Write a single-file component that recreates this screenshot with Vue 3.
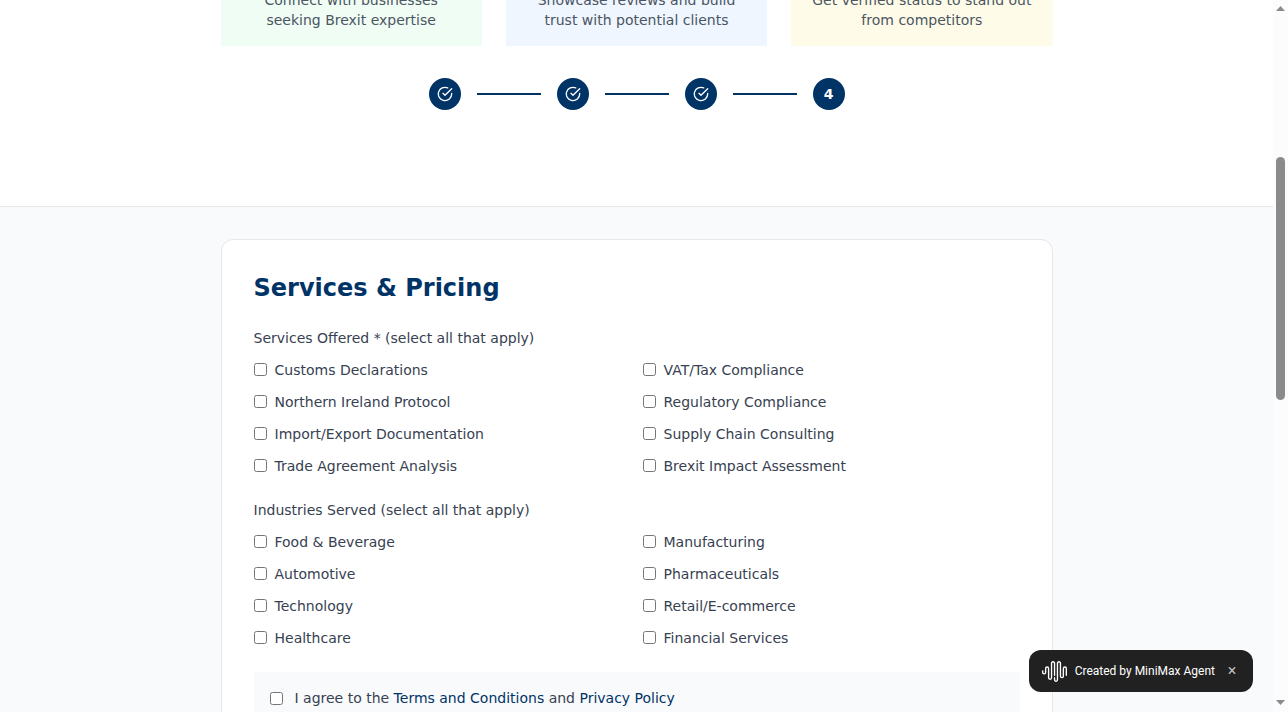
<script setup>
import { ref } from 'vue'

const benefits = [
  { tone: 'green', text: 'Connect with businesses seeking Brexit expertise' },
  { tone: 'blue', text: 'Showcase reviews and build trust with potential clients' },
  { tone: 'yellow', text: 'Get verified status to stand out from competitors' },
]

const steps = [1, 2, 3, 4]
const currentStep = 4

const groups = [
  {
    id: 'services',
    label: 'Services Offered * (select all that apply)',
    options: [
      'Customs Declarations',
      'VAT/Tax Compliance',
      'Northern Ireland Protocol',
      'Regulatory Compliance',
      'Import/Export Documentation',
      'Supply Chain Consulting',
      'Trade Agreement Analysis',
      'Brexit Impact Assessment',
    ],
  },
  {
    id: 'industries',
    label: 'Industries Served (select all that apply)',
    options: [
      'Food & Beverage',
      'Manufacturing',
      'Automotive',
      'Pharmaceuticals',
      'Technology',
      'Retail/E-commerce',
      'Healthcare',
      'Financial Services',
    ],
  },
]

const selected = ref([])
const agreed = ref(false)
const badgeOpen = ref(true)
</script>

<template>
  <div class="window">
    <div class="page">
      <header class="intro">
        <div class="container">
          <div class="benefits">
            <div v-for="b in benefits" :key="b.tone" class="benefit" :class="b.tone">
              <p>{{ b.text }}</p>
            </div>
          </div>
          <div class="steps">
            <template v-for="step in steps" :key="step">
              <div class="step">
                <svg v-if="step < currentStep" class="check" viewBox="0 0 24 24" aria-hidden="true">
                  <path d="M22 11.08V12a10 10 0 1 1-5.93-9.14" />
                  <path d="m9 11 3 3L22 4" />
                </svg>
                <span v-else>{{ step }}</span>
              </div>
              <div v-if="step < steps.length" class="line"></div>
            </template>
          </div>
        </div>
      </header>

      <main class="container">
        <form class="card" @submit.prevent>
          <h2>Services &amp; Pricing</h2>
          <fieldset v-for="group in groups" :key="group.id" class="group">
            <legend>{{ group.label }}</legend>
            <div class="options">
              <label v-for="option in group.options" :key="option" class="option">
                <input v-model="selected" type="checkbox" :value="option" />
                <span>{{ option }}</span>
              </label>
            </div>
          </fieldset>
          <div class="terms">
            <input id="agree" v-model="agreed" type="checkbox" />
            <label for="agree">
              I agree to the <a href="#terms">Terms and Conditions</a> and
              <a href="#privacy">Privacy Policy</a>
            </label>
          </div>
        </form>
      </main>

      <div v-if="badgeOpen" class="badge">
        <svg class="logo" viewBox="0 0 24 24" aria-hidden="true">
          <path d="M16.278 2c1.156 0 2.093.927 2.093 2.07v12.501a.74.74 0 00.744.709.74.74 0 00.743-.709V9.099a2.06 2.06 0 012.071-2.049A2.06 2.06 0 0124 9.1v6.561a.649.649 0 01-.652.645.649.649 0 01-.653-.645V9.1a.762.762 0 00-.766-.758.762.762 0 00-.766.758v7.472a2.037 2.037 0 01-2.048 2.026 2.037 2.037 0 01-2.048-2.026v-12.5a.785.785 0 00-.788-.753.785.785 0 00-.789.752l-.001 15.904A2.037 2.037 0 0113.441 22a2.037 2.037 0 01-2.048-2.026V18.04c0-.356.292-.645.652-.645.36 0 .652.289.652.645v1.934c0 .263.142.506.372.638.23.131.514.131.744 0a.734.734 0 00.372-.638V4.07c0-1.143.937-2.07 2.093-2.07zm-5.674 0c1.156 0 2.093.927 2.093 2.07v11.523a.648.648 0 01-.652.645.648.648 0 01-.652-.645V4.07a.785.785 0 00-.789-.78.785.785 0 00-.789.78v14.013a2.06 2.06 0 01-2.07 2.048 2.06 2.06 0 01-2.071-2.048V9.1a.762.762 0 00-.766-.758.762.762 0 00-.766.758v3.8a2.06 2.06 0 01-2.071 2.049A2.06 2.06 0 010 12.9v-1.378c0-.357.292-.646.652-.646.36 0 .653.29.653.646V12.9c0 .418.343.757.766.757s.766-.339.766-.757V9.099a2.06 2.06 0 012.07-2.048 2.06 2.06 0 012.071 2.048v8.984c0 .419.343.758.767.758.423 0 .766-.339.766-.758V4.07c0-1.143.937-2.07 2.093-2.07z" />
        </svg>
        <span>Created by MiniMax Agent</span>
        <button type="button" aria-label="Close" @click="badgeOpen = false">×</button>
      </div>
    </div>

    <div class="scrollbar" aria-hidden="true">
      <svg viewBox="0 0 9 5"><path d="M4.5 0 9 5H0z" /></svg>
      <div class="track"><div class="thumb"></div></div>
      <svg viewBox="0 0 9 5"><path d="M0 0h9L4.5 5z" /></svg>
    </div>
  </div>
</template>

<style>
body {
  margin: 0;
}
</style>

<style scoped>
.window {
  display: flex;
  height: 100vh;
  overflow: hidden;
  font-family: "DejaVu Sans", sans-serif;
  font-size: 14px;
  line-height: 20px;
  color: #374151;
}
.page {
  position: relative;
  flex: 1;
  min-width: 0;
  overflow: hidden;
  background: #f9fafb;
}
.container {
  box-sizing: border-box;
  max-width: 896px;
  margin: 0 auto;
  padding: 0 32px;
}
.intro {
  margin-top: -10px;
  padding-bottom: 96px;
  background: #fff;
  border-bottom: 1px solid #e5e7eb;
}
.benefits {
  display: grid;
  grid-template-columns: repeat(3, 1fr);
  gap: 24px;
  margin-bottom: 32px;
}
.benefit {
  padding: 0 16px 16px;
  text-align: center;
  color: #4b5563;
}
.benefit p {
  margin: 0;
}
.green {
  background: #f0fdf4;
}
.blue {
  background: #eff6ff;
}
.yellow {
  background: #fefce8;
}
.steps {
  display: flex;
  align-items: center;
  justify-content: center;
  gap: 16px;
}
.step {
  display: flex;
  align-items: center;
  justify-content: center;
  width: 32px;
  height: 32px;
  border-radius: 50%;
  background: #003366;
  color: #fff;
  font-weight: 700;
}
.check {
  width: 16px;
  height: 16px;
  fill: none;
  stroke: #fff;
  stroke-width: 2;
  stroke-linecap: round;
  stroke-linejoin: round;
}
.line {
  width: 64px;
  height: 2px;
  background: #003366;
}
.card {
  margin-top: 32px;
  padding: 32px;
  background: #fff;
  border: 1px solid #e5e7eb;
  border-radius: 12px;
}
h2 {
  margin: 0 0 24px;
  font-size: 24px;
  line-height: 32px;
  font-weight: 700;
  color: #003366;
}
.group {
  min-width: 0;
  margin: 0 0 24px;
  padding: 0;
  border: 0;
}
legend {
  padding: 0 0 12px;
}
.options {
  display: grid;
  grid-template-columns: repeat(2, 1fr);
  gap: 12px;
}
.option,
.terms {
  display: flex;
  align-items: flex-start;
  gap: 8px;
}
input {
  width: 13px;
  height: 13px;
  margin: 3px 0 0;
  flex: none;
}
.terms {
  gap: 12px;
  padding: 16px;
  background: #f9fafb;
}
.terms input {
  margin-top: 4px;
}
a {
  color: #003366;
  text-decoration: none;
}
.badge {
  position: absolute;
  right: 20px;
  bottom: 20px;
  display: flex;
  align-items: center;
  box-sizing: border-box;
  height: 42px;
  padding: 0 12px 0 13px;
  border-radius: 12px;
  background: #212121;
  color: #fff;
  font-family: Roboto, sans-serif;
  font-size: 12px;
  line-height: 18px;
}
.logo {
  width: 25px;
  height: 25px;
  margin-right: 8px;
  fill: #fff;
}
.badge button {
  width: 18px;
  height: 18px;
  margin-left: 8px;
  padding: 0;
  border: 0;
  background: transparent;
  color: #bdbdbd;
  font: 16px/18px Roboto, sans-serif;
}
.scrollbar {
  display: flex;
  flex-direction: column;
  align-items: center;
  box-sizing: border-box;
  width: 15px;
  padding: 6px 0 7px;
  background: #fcfcfc;
}
.scrollbar svg {
  width: 9px;
  height: 5px;
  flex: none;
  fill: #8b8b8b;
}
.track {
  flex: 1;
  width: 9px;
  padding-top: 146px;
}
.thumb {
  height: 243px;
  border-radius: 5px;
  background: #8b8b8b;
}
</style>
